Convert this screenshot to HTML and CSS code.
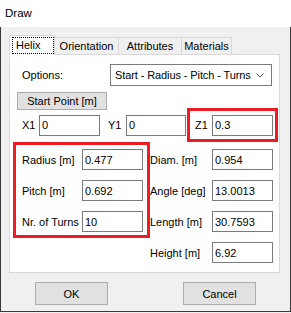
FILE: index.html
```html
<!DOCTYPE html>
<html lang="en">
<head>
    <meta charset="UTF-8">
    <title>Draw</title>
    <link rel="stylesheet" href="styles.css">
</head>
<body>
    <div class="window">
        <div class="titlebar">Draw</div>
        <div class="dialog">
            <div class="tabs">
                <div class="tab active"><span class="focus">Helix</span></div>
                <div class="tab orientation">Orientation</div>
                <div class="tab attributes">Attributes</div>
                <div class="tab materials">Materials</div>
            </div>
            <div class="panel">
                <div class="options-row">
                    <span class="options-label">Options:</span>
                    <div class="select">
                        <span class="select-text">Start - Radius - Pitch - Turns</span>
                        <svg class="chevron" width="8" height="5" viewBox="0 0 8 5">
                            <polyline points="0.5,0.5 4,4 7.5,0.5" fill="none" stroke="#555" stroke-width="1"/>
                        </svg>
                    </div>
                </div>
                <button class="btn start-btn">Start Point [m]</button>
                <div class="xyz-row">
                    <span class="lbl lbl-x1">X1</span>
                    <input class="field-input w61" type="text" value="0">
                    <span class="lbl lbl-y1">Y1</span>
                    <input class="field-input w60" type="text" value="0">
                    <div class="highlight z1-box">
                        <span class="lbl lbl-z1">Z1</span>
                        <input class="field-input w61" type="text" value="0.3">
                    </div>
                </div>
                <div class="params">
                    <div class="highlight main-box">
                        <div class="field">
                            <span class="lbl lbl-main">Radius [m]</span>
                            <input class="field-input w61" type="text" value="0.477">
                        </div>
                        <div class="field">
                            <span class="lbl lbl-main">Pitch [m]</span>
                            <input class="field-input w61" type="text" value="0.692">
                        </div>
                        <div class="field">
                            <span class="lbl lbl-main">Nr. of Turns</span>
                            <input class="field-input w61" type="text" value="10">
                        </div>
                    </div>
                    <div class="derived">
                        <div class="field">
                            <span class="lbl lbl-derived">Diam. [m]</span>
                            <input class="field-input w61" type="text" value="0.954">
                        </div>
                        <div class="field">
                            <span class="lbl lbl-derived">Angle [deg]</span>
                            <input class="field-input w61" type="text" value="13.0013">
                        </div>
                        <div class="field">
                            <span class="lbl lbl-derived">Length [m]</span>
                            <input class="field-input w61" type="text" value="30.7593">
                        </div>
                        <div class="field">
                            <span class="lbl lbl-derived">Height [m]</span>
                            <input class="field-input w61" type="text" value="6.92">
                        </div>
                    </div>
                </div>
            </div>
            <div class="buttons">
                <button class="btn dlg-btn">OK</button>
                <button class="btn dlg-btn">Cancel</button>
            </div>
        </div>
    </div>
</body>
</html>
```

FILE: styles.css
```css
body {
    margin: 0;
    background: #f0f0f0;
    font-family: "Liberation Sans", Arial, sans-serif;
    font-size: 11px;
    color: #000;
}
.window {
    width: 291px;
    height: 312px;
    background: #f0f0f0;
}
.titlebar {
    height: 27px;
    line-height: 26px;
    padding-left: 5px;
    background: #fff;
    font-size: 11.5px;
}
.dialog {
    height: 285px;
    box-sizing: border-box;
    border: 1px solid #3a3a3a;
    border-top: none;
    padding: 8px 0 0 8px;
}
.tabs {
    display: flex;
    align-items: flex-end;
    height: 19px;
}
.tab {
    box-sizing: border-box;
    height: 17px;
    margin-left: -1px;
    border: 1px solid #d9d9d9;
    border-bottom: none;
    background: #f0f0f0;
    text-align: center;
    line-height: 16px;
}
.tab.active {
    position: relative;
    z-index: 1;
    width: 46px;
    height: 20px;
    margin-left: 0;
    margin-bottom: -1px;
    background: #fff;
    text-align: left;
}
.focus {
    display: block;
    box-sizing: border-box;
    width: 42px;
    height: 17px;
    margin: 1px 0 0 2px;
    padding-left: 3px;
    border: 1px dotted #000;
    line-height: 15px;
}
.orientation { width: 65px; }
.attributes { width: 64px; }
.materials { width: 51px; }
.panel {
    width: 271px;
    height: 219px;
    box-sizing: border-box;
    border: 1px solid #d9d9d9;
    background: #fff;
    padding-top: 9px;
}
.options-row {
    display: flex;
    align-items: center;
    height: 22px;
    padding-left: 12px;
}
.options-label {
    width: 88px;
}
.select {
    display: flex;
    align-items: center;
    justify-content: space-between;
    box-sizing: border-box;
    width: 162px;
    height: 22px;
    padding: 0 7px 0 4px;
    border: 1px solid #7a7a7a;
}
.select-text {
    letter-spacing: -0.1px;
    white-space: nowrap;
}
.chevron {
    display: block;
    flex-shrink: 0;
    margin-top: 1px;
}
.btn {
    box-sizing: border-box;
    padding: 0;
    border: 1px solid #adadad;
    background: #e1e1e1;
    font-family: inherit;
    font-size: 11px;
    color: #000;
}
.start-btn {
    display: block;
    width: 90px;
    height: 18px;
    margin: 6px 0 0 7px;
}
.xyz-row {
    display: flex;
    align-items: center;
    height: 34px;
    margin-top: -2px;
    padding-left: 12px;
}
.field-input {
    box-sizing: border-box;
    height: 21px;
    margin: 0;
    padding: 0 2px;
    border: 1px solid #7a7a7a;
    background: #fff;
    font-family: inherit;
    font-size: 11px;
    color: #000;
    outline: none;
}
.w61 { width: 61px; }
.w60 { width: 60px; }
.lbl-x1 { width: 17px; }
.lbl-y1 { width: 18px; margin-left: 8px; }
.highlight {
    box-sizing: border-box;
    border: 3px solid #ed1c24;
}
.z1-box {
    display: flex;
    align-items: center;
    width: 91px;
    height: 34px;
    margin-left: 1px;
    padding-left: 5px;
}
.lbl-z1 { width: 17px; }
.params {
    display: flex;
    margin-left: 3px;
}
.main-box {
    display: flex;
    flex-direction: column;
    gap: 10px;
    width: 137px;
    height: 96px;
    padding: 4px 0 0 6px;
}
.field {
    display: flex;
    align-items: center;
    height: 21px;
}
.lbl-main { width: 60px; white-space: nowrap; }
.derived {
    display: flex;
    flex-direction: column;
    gap: 10px;
    padding-top: 7px;
}
.lbl-derived { width: 62px; white-space: nowrap; }
.buttons {
    display: flex;
    gap: 75px;
    margin: 9px 0 0 26px;
}
.dlg-btn {
    width: 73px;
    height: 23px;
}
```
